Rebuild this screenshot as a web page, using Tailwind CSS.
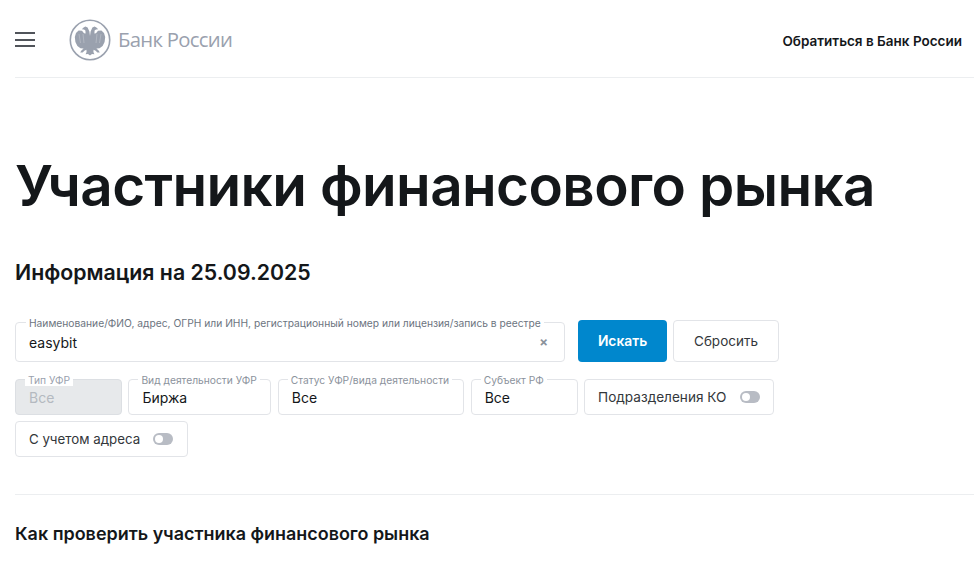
<!DOCTYPE html>
<html lang="ru">
<head>
  <meta charset="UTF-8">
  <meta name="viewport" content="width=device-width, initial-scale=1.0">
  <script src="https://cdn.jsdelivr.net/npm/@tailwindcss/browser@4"></script>
  <title>Участники финансового рынка</title>
</head>
<body class="bg-white overflow-hidden font-['Inter',sans-serif] text-[#14171a]">
  <div class="pl-[15px] w-[974px] h-[565px] overflow-hidden">
    <!-- Header -->
    <header class="flex items-center h-[78px] border-b border-[#eceef0] pr-[12px]">
      <button class="flex flex-col gap-[4.5px] w-[20px] mt-[2px]" aria-label="Меню">
        <span class="block h-[2px] bg-[#50545a]"></span>
        <span class="block h-[2px] bg-[#50545a]"></span>
        <span class="block h-[2px] bg-[#50545a]"></span>
      </button>
      <div class="flex items-center ml-[34px] gap-[7px] mt-[2px]">
        <svg width="42" height="42" viewBox="0 0 42 42" fill="none">
          <circle cx="21" cy="21" r="19.7" stroke="#9aa1ae" stroke-width="1.6"/>
          <path fill="#9aa1ae" d="M21 17 L20.4 12.5 L18.6 8.6 L16.4 7.6 L14.6 8.6 L12.8 10.2 L15 10.4 L16.4 11.4 L16.6 14.6 L15 14.2 L13 11.8 L9.6 11.6 L7 14 L5.8 18 L6.4 23 L8.4 27 L11.4 29.2 L14.6 29.4 L12.4 31.4 L11.2 33.6 L13.6 33.4 L15.4 31.8 L17.4 30.8 L17.6 33 L16.6 35.2 L19 35 L21 36.4 Z"/>
          <path fill="#9aa1ae" d="M21 17 L21.6 12.5 L23.4 8.6 L25.6 7.6 L27.4 8.6 L29.2 10.2 L27 10.4 L25.6 11.4 L25.4 14.6 L27 14.2 L29 11.8 L32.4 11.6 L35 14 L36.2 18 L35.6 23 L33.6 27 L30.6 29.2 L27.4 29.4 L29.6 31.4 L30.8 33.6 L28.4 33.4 L26.6 31.8 L24.6 30.8 L24.4 33 L25.4 35.2 L23 35 L21 36.4 Z"/>
          <path stroke="#ffffff" stroke-opacity="0.45" stroke-width="0.5" d="M10 15l1.5 9M14 15l1 9M32 15l-1.5 9M28 15l-1 9"/>
        </svg>
        <span class="font-['Open_Sans',sans-serif] text-[20.3px] tracking-[-0.7px] text-[#9aa1ae]">Банк России</span>
      </div>
      <a class="ml-auto mt-[5px] text-[13.5px] font-semibold text-[#14171a]">Обратиться в Банк России</a>
    </header>

    <h1 class="mt-[72px] text-[56.6px] leading-[72px] font-semibold tracking-[-0.6px] whitespace-nowrap">Участники финансового рынка</h1>
    <h2 class="mt-[36px] text-[21.3px] leading-[28px] font-semibold">Информация на 25.09.2025</h2>

    <!-- Search row -->
    <div class="flex items-end mt-[34px] w-[764px]">
      <div class="relative flex items-center w-[550px] h-[40px] px-[13px] border border-[#e2e4e8] rounded-[4px]">
        <label class="absolute left-[10px] -top-[6px] px-[3px] bg-white text-[10.25px] leading-[12px] text-[#6c7480] whitespace-nowrap">Наименование/ФИО, адрес, ОГРН или ИНН, регистрационный номер или лицензия/запись в реестре</label>
        <span class="text-[14px]">easybit</span>
        <span class="ml-auto mr-[3px] text-[13px] font-bold leading-none text-[#8b929c]">×</span>
      </div>
      <button class="ml-[13px] w-[89px] h-[42px] rounded-[4px] bg-[#0087cd] text-white text-[13.8px] font-semibold">Искать</button>
      <button class="ml-[6px] w-[106px] h-[42px] rounded-[4px] border border-[#e2e4e8] text-[13.5px] text-[#33373b]">Сбросить</button>
    </div>

    <!-- Filters -->
    <div class="flex flex-wrap gap-x-[6.4px] gap-y-[6px] mt-[17px] w-[780px]">
      <div class="relative flex items-center w-[107px] h-[36px] px-[13px] border border-[#dcdfe3] rounded-[4px] bg-[#e7e9eb]">
        <label class="absolute left-[9px] -top-[6px] px-[3px] bg-white text-[10.25px] leading-[12px] text-[#9aa1ae]">Тип УФР</label>
        <span class="text-[14px] text-[#b4b9c0]">Все</span>
      </div>
      <div class="relative flex items-center w-[143px] h-[36px] px-[13px] border border-[#e2e4e8] rounded-[4px]">
        <label class="absolute left-[9px] -top-[6px] px-[3px] bg-white text-[10.25px] leading-[12px] text-[#8b929c] whitespace-nowrap">Вид деятельности УФР</label>
        <span class="text-[14px]">Биржа</span>
      </div>
      <div class="relative flex items-center w-[186.5px] h-[36px] px-[13px] border border-[#e2e4e8] rounded-[4px]">
        <label class="absolute left-[9px] -top-[6px] px-[3px] bg-white text-[10.25px] leading-[12px] text-[#8b929c] whitespace-nowrap">Статус УФР/вида деятельности</label>
        <span class="text-[14px]">Все</span>
      </div>
      <div class="relative flex items-center w-[107px] h-[36px] px-[13px] border border-[#e2e4e8] rounded-[4px]">
        <label class="absolute left-[9px] -top-[6px] px-[3px] bg-white text-[10.25px] leading-[12px] text-[#8b929c] whitespace-nowrap">Субъект РФ</label>
        <span class="text-[14px]">Все</span>
      </div>
      <div class="flex items-center justify-between w-[190px] h-[36px] pl-[13px] pr-[13px] border border-[#e2e4e8] rounded-[4px]">
        <span class="text-[13.6px] text-[#33373b]">Подразделения КО</span>
        <span class="flex items-center w-[20px] h-[12px] pl-[2px] rounded-full bg-[#b8bcc4]"><span class="block w-[8px] h-[8px] rounded-full bg-white"></span></span>
      </div>
      <div class="flex items-center justify-between w-[173px] h-[36px] pl-[13px] pr-[14px] border border-[#e2e4e8] rounded-[4px]">
        <span class="text-[13.3px] mt-[1px] text-[#33373b]">С учетом адреса</span>
        <span class="flex items-center w-[20px] h-[12px] pl-[2px] rounded-full bg-[#b8bcc4]"><span class="block w-[8px] h-[8px] rounded-full bg-white"></span></span>
      </div>
    </div>

    <div class="mt-[37px] h-px bg-[#eceef0]"></div>
    <h3 class="mt-[27px] text-[17.95px] leading-[24px] font-semibold">Как проверить участника финансового рынка</h3>
  </div>
</body>
</html>
